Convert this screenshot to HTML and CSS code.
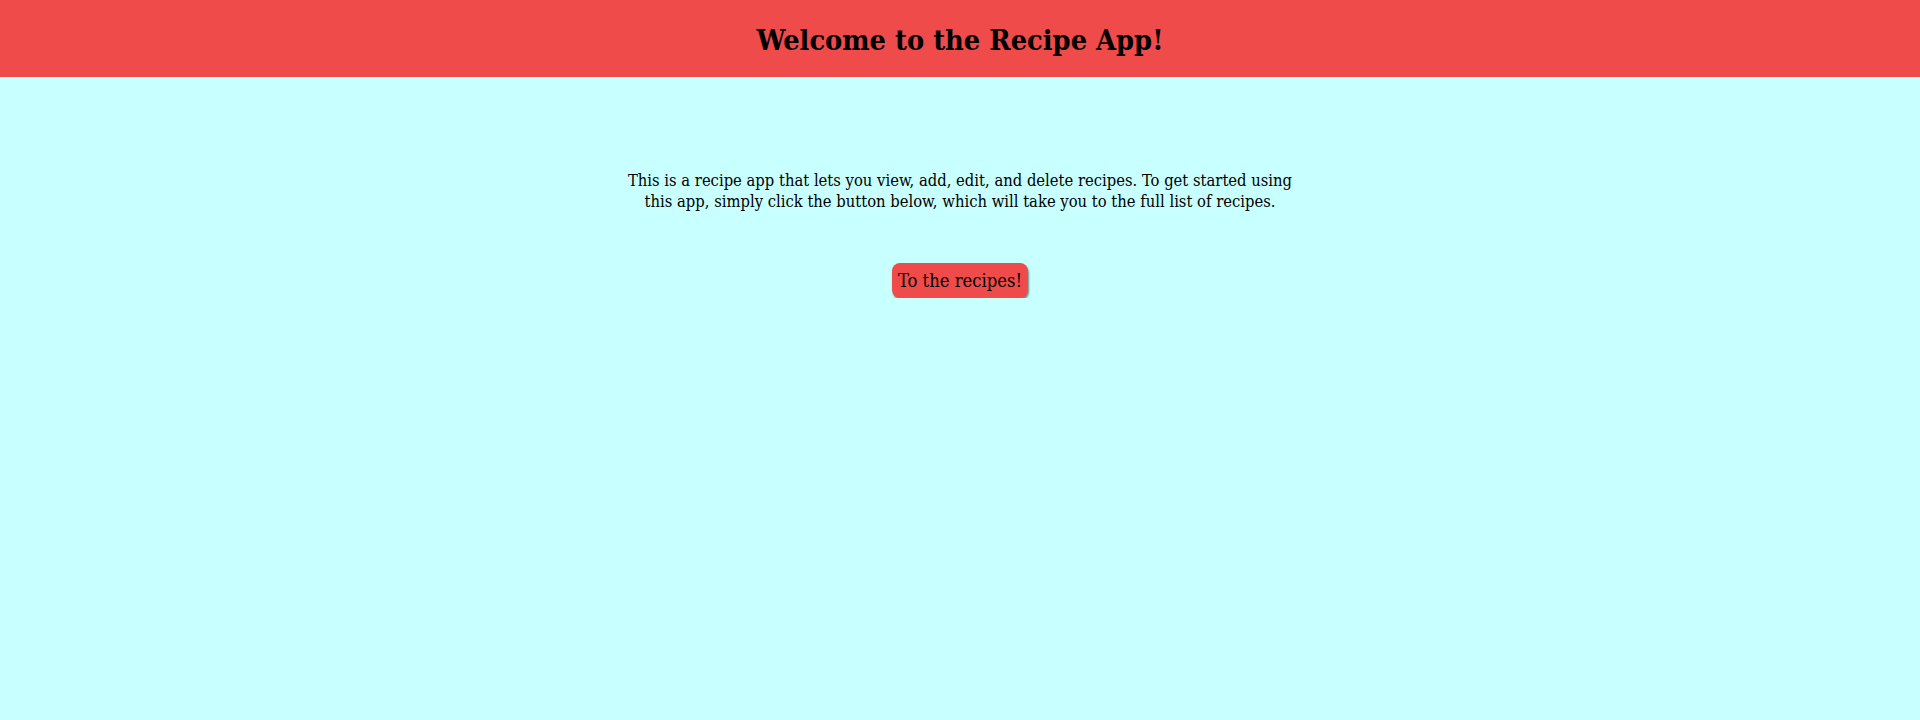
FILE: index.html
```html
<!DOCTYPE html>
<html lang="en">
<head>
<meta charset="utf-8">
<title>Recipe App</title>
<link rel="stylesheet" href="styles.css">
</head>
<body>
<header class="header">
  <h1 class="title">Welcome to the Recipe App!</h1>
</header>
<main class="main">
  <p class="intro">This is a recipe app that lets you view, add, edit, and delete recipes. To get started using this app, simply click the button below, which will take you to the full list of recipes.</p>
  <button class="cta">To the recipes!</button>
</main>
</body>
</html>
```
FILE: styles.css
```css
html, body {
  margin: 0;
  padding: 0;
  background: #c8ffff;
  font-family: "DejaVu Serif Condensed", "DejaVu Serif", serif;
}
.header {
  background: #ef4b4b;
  height: 77px;
  display: flex;
  align-items: center;
  justify-content: center;
}
.title {
  margin: 0;
  padding-top: 2px;
  font-size: 28.7px;
  font-weight: bold;
  color: #000;
}
.main {
  display: flex;
  flex-direction: column;
  align-items: center;
  padding-top: 93px;
}
.intro {
  margin: 0;
  max-width: 684px;
  text-align: center;
  font-size: 16.45px;
  line-height: 21px;
  color: #000;
}
.cta {
  margin-top: 51px;
  background: #ef4b4b;
  border: none;
  border-radius: 8px;
  padding: 7px 6px;
  font-family: inherit;
  font-size: 18.3px;
  color: #000;
  box-shadow: 1px 2px 2px rgba(0,0,0,0.45);
}
```
